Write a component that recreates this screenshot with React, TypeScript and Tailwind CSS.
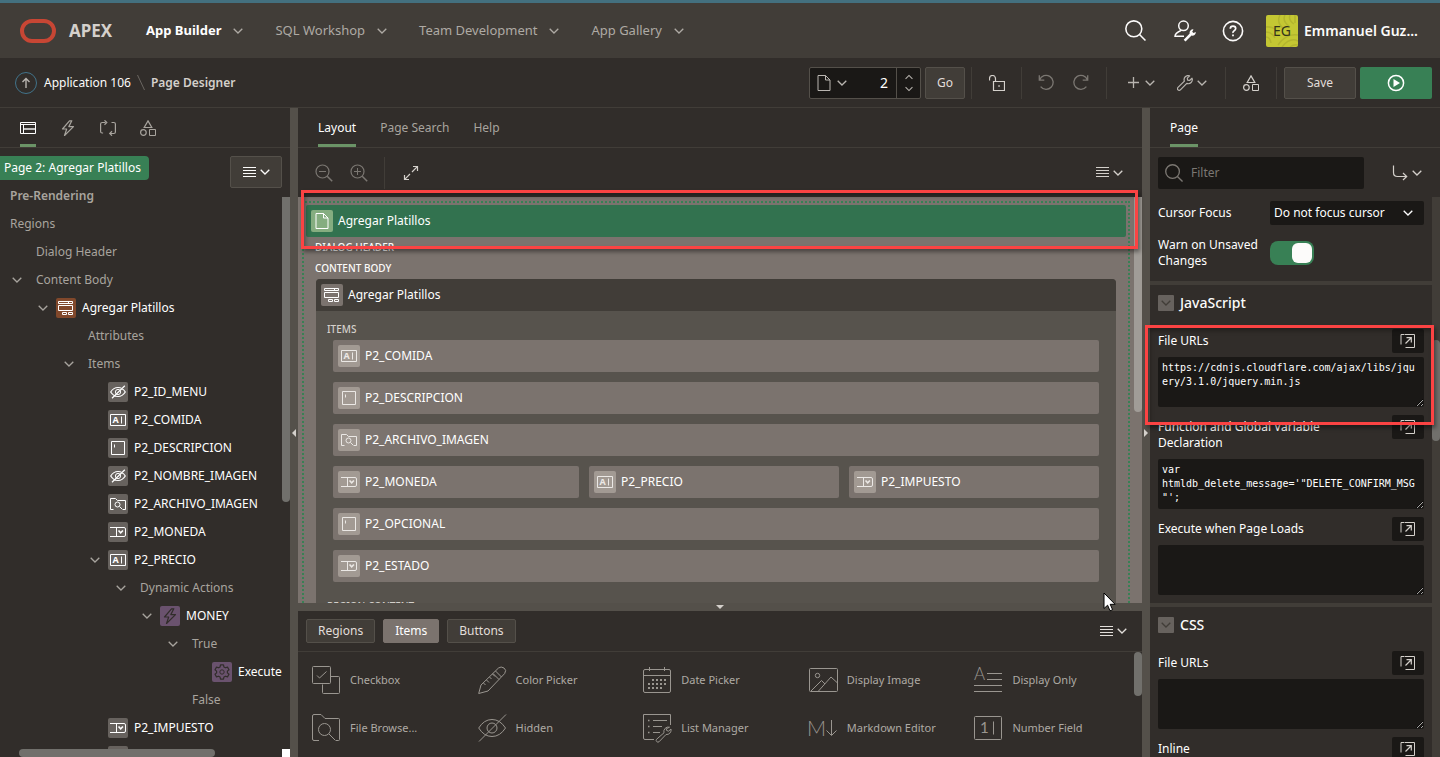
import { useState, type ReactNode } from "react";
import clsx from "clsx";

type IconProps = { className?: string };

function Svg({ size = 16, children, className }: { size?: number; children: ReactNode; className?: string }) {
  return (
    <svg
      width={size}
      height={size}
      viewBox={`0 0 ${size} ${size}`}
      fill="none"
      stroke="currentColor"
      aria-hidden="true"
      className={clsx("shrink-0", className)}
    >
      {children}
    </svg>
  );
}

/* ---------- toolbar icons ---------- */

function Chevron({ className }: IconProps) {
  return (
    <svg width="10" height="6" viewBox="0 0 10 6" fill="none" stroke="currentColor" strokeWidth="1.3" aria-hidden="true" className={clsx("shrink-0", className)}>
      <path d="M.7.7 5 5 9.3.7" />
    </svg>
  );
}

function MenuIcon() {
  return (
    <svg width="13" height="11" viewBox="0 0 13 11" stroke="currentColor" aria-hidden="true" className="shrink-0">
      <path d="M0 .5h13M0 3.5h13M0 6.5h13M0 9.5h13" />
    </svg>
  );
}

const TreeTabIcon = () => (
  <Svg>
    <path d="M.5 2.5h15v11H.5zM.5 4.5h15M3.5 4.5v9" />
    <path d="M4 9h11" strokeWidth="2" opacity=".7" />
  </Svg>
);

const Bolt = ({ className }: IconProps) => (
  <Svg className={className}>
    <path d="M9.5.8 2.5 9h4.2l-2.2 6.5L13.5 6.6H8.8L11.8.8z" strokeLinejoin="round" strokeWidth="1.2" />
  </Svg>
);

const LoopIcon = () => (
  <Svg>
    <path d="M5.5 2.5H2.2Q.6 2.5.6 4v7.5Q.6 13 2.1 13h1M4.5.3l2.3 2.2-2.3 2.2M10.5 13.5h3.3q1.6 0 1.6-1.5V4q0-1.5-1.6-1.5h-2.300M12 11.300l-2.300 2.200 2.300 2.200" strokeWidth="1.2" />
  </Svg>
);

const ShapesIcon = () => (
  <Svg>
    <path d="M8 .9 11.8 7.5H4.2z" strokeWidth="1.2" />
    <circle cx="3.4" cy="12.5" r="2.8" strokeWidth="1.2" />
    <path d="M9.5 9.5h6v6h-6z" />
  </Svg>
);

const FileIcon = () => (
  <Svg>
    <path d="M2 .5h7.500L14 5v10.500H2zM9.500.5V5H14" />
  </Svg>
);

const LockIcon = () => (
  <Svg>
    <path d="M4.500 6.500h11v9h-11zM6.500 6.500V3.500a3 3 0 0 0-6 0v2" strokeWidth="1.2" />
    <path d="M9.300 11h1.500" strokeWidth="1.500" />
  </Svg>
);

const UndoIcon = ({ className }: IconProps) => (
  <Svg className={className} size={17}>
    <path d="M1.300 1.200v5h5M1.600 5.800A7 7 0 1 1 2.600 12.700" strokeWidth="1.300" />
  </Svg>
);

const WrenchIcon = () => (
  <Svg>
    <path d="M12.600.9a4 4 0 0 0-5.200 5.200L1 12.400a1.600 1.600 0 0 0 2.400 2.400L9.800 8.400a4 4 0 0 0 5.200-5.200l-2.400 2.300-2-.3-.3-2z" strokeLinejoin="round" strokeWidth="1.200" />
  </Svg>
);

const PlayIcon = () => (
  <Svg size={18}>
    <circle cx="9" cy="9" r="7.600" strokeWidth="1.500" />
    <path d="M6.500 5v8l6.500-4z" fill="currentColor" stroke="none" />
  </Svg>
);

const ZoomIcon = ({ plus }: { plus?: boolean }) => (
  <Svg size={18}>
    <circle cx="7.500" cy="7.500" r="6.500" strokeWidth="1.200" />
    <path d="m12.200 12.200 5 5" strokeWidth="1.500" />
    <path d={plus ? "M4 7.5h7M7.5 4v7" : "M4 7.5h7"} />
  </Svg>
);

const SearchIcon = ({ size = 18 }: { size?: number }) => (
  <svg width={size} height={size} viewBox="0 0 20 20" fill="none" stroke="currentColor" strokeWidth="1.500" aria-hidden="true" className="shrink-0">
    <circle cx="8.400" cy="8.400" r="7.600" />
    <path d="m13.800 13.800 5.700 5.700" />
  </svg>
);

const ExpandIcon = () => (
  <Svg>
    <path d="M10 1.500h4.500V6M14.300 1.700 9 7M1.500 10v4.500H6M1.700 14.300 7 9" strokeWidth="1.200" />
  </Svg>
);

const GoToIcon = () => (
  <Svg>
    <path d="M1.500.5v7q0 4 4 4h9M11 8l3.700 3.500L11 15" strokeWidth="1.200" />
  </Svg>
);

const PopOutIcon = () => (
  <Svg>
    <path d="M4 1.500H1v10M4.500 1.500h10v13h-9" />
    <path d="M5.500 10.500 11 5M6.500 4.700h4.800v4.800" strokeWidth="1.200" />
  </Svg>
);

const AdminIcon = () => (
  <Svg size={22}>
    <circle cx="9.500" cy="5.800" r="4.800" strokeWidth="1.500" />
    <path d="M7 10.500Q1 13 1 16.300h9" strokeWidth="1.500" />
    <path d="m9.700 19.800 6-6.200a3.400 3.400 0 0 1 3.800-4.200l-1.300 2.400 1.300 1.300 2.300-1a3.400 3.400 0 0 1-4.300 3.500l-6 6z" fill="currentColor" stroke="none" />
  </Svg>
);

const HelpIcon = () => (
  <Svg size={22}>
    <circle cx="11" cy="11" r="9.600" strokeWidth="1.600" />
    <path d="M8.300 8.800q0-2.600 2.700-2.600t2.700 2.400q0 1.300-1.500 2.200T11 13" strokeWidth="1.700" />
    <path d="M10.100 14.500h1.800v1.700h-1.800z" fill="currentColor" stroke="none" />
  </Svg>
);

/* ---------- component type icons ---------- */

type Kind = "region" | "hidden" | "text" | "textarea" | "file" | "select" | "bolt" | "gear";

function KindIcon({ kind }: { kind: Kind }) {
  switch (kind) {
    case "region":
      return (
        <Svg>
          <path d="M.5 1.500h14v2H.5zM10.500 1.500v2M.5 5.500h14v5H.5zM4.500 12.500h4v2h-4zM10.500 12.500h4v2h-4z" />
        </Svg>
      );
    case "hidden":
      return (
        <Svg>
          <path d="M.7 8Q3.500 3.500 8 3.500T15.300 8Q12.500 12.500 8 12.500T.7 8zM2 14.300 14.800 1.700" strokeWidth="1.200" />
          <circle cx="8" cy="8" r="2.600" />
        </Svg>
      );
    case "text":
      return (
        <Svg>
          <path d="M.5 2.500h15v11H.5zM11.500 4.500v7" />
          <text x="2.500" y="11.300" fontSize="9" fontWeight="700" fill="currentColor" stroke="none">A</text>
        </Svg>
      );
    case "textarea":
      return (
        <Svg>
          <path d="M1.500 1.500h13v13h-13zM4.500 4.500v3" />
        </Svg>
      );
    case "file":
      return (
        <Svg>
          <path d="M3.500 13.500H.5v-11h5l2 2h8v9h-2.500" />
          <circle cx="7.500" cy="8.500" r="2.500" />
          <path d="m9.500 10.500 3 3" />
        </Svg>
      );
    case "select":
      return (
        <Svg>
          <path d="M0 3.500h14q1.500 0 1.500 1.500v6q0 1.500-1.500 1.500H0M6.500 3.500v9" />
          <path d="m8.500 6.500 2.200 2.300 2.200-2.300" strokeWidth="1.600" />
        </Svg>
      );
    case "bolt":
      return <Bolt />;
    case "gear":
      return (
        <Svg>
          <path d="M6.500.8h3l.4 2.100 1.600.9 2-.7L15 5.700l-1.600 1.400v1.800l1.600 1.400-1.500 2.600-2-.7-1.600.9-.4 2.100h-3l-.4-2.100-1.600-.9-2 .7L1 10.300l1.600-1.400V7.100L1 5.700l1.500-2.600 2 .7 1.600-.9z" strokeLinejoin="round" strokeWidth="1.200" />
          <circle cx="8" cy="8" r="2.200" />
        </Svg>
      );
  }
}

/* ---------- gallery icons ---------- */

const GALLERY: { label: string; icon: ReactNode }[] = [
  {
    label: "Checkbox",
    icon: (
      <>
        <rect x=".5" y=".5" width="18" height="17" rx="1" />
        <path d="m5 9.500 2.500 2.500L14.500 5.500M19 10.500h7.500q1 0 1 1v15q0 1-1 1h-15q-1 0-1-1v-8" />
      </>
    ),
  },
  {
    label: "Color Picker",
    icon: (
      <path d="M.7 27.500 3 19 20.500 2Q23 0 26 2t.7 5.500L10 25zM17.500 5l6 6M14.500 8l2.500 2.500M11.500 11l2 2M8.500 14l2.500 2.500M5.500 17l2 2M15 7.500l6 6" />
    ),
  },
  {
    label: "Date Picker",
    icon: (
      <>
        <rect x=".5" y="3.500" width="27" height="23" rx="1.500" />
        <path d="M.5 9.500h27M6.500 1v4M21.500 1v4" />
        <path d="M9 14h14M5 18h18M5 22h14" strokeDasharray="2 2" strokeWidth="2" />
      </>
    ),
  },
  {
    label: "Display Image",
    icon: (
      <>
        <rect x=".5" y="2.500" width="28" height="23" rx="1" />
        <circle cx="8.500" cy="9.500" r="2.200" />
        <path d="m2 25 10.500-10.500 3.500 3.500M9.500 25 22 11l6 5.500" />
      </>
    ),
  },
  {
    label: "Display Only",
    icon: (
      <>
        <text x="0" y="14" fontSize="17" fontWeight="300" fill="currentColor" stroke="none" className="font-[Lato,sans-serif]">A</text>
        <path d="M13 7.500h15M13 13.500h15M0 19.500h28M0 25.500h28" />
      </>
    ),
  },
  {
    label: "File Browse...",
    icon: (
      <>
        <path d="M7 26.500H2Q.5 26.500.5 25V2Q.5.5 2 .5h7l4 4h13.500q1 0 1 1v20q0 1-1 1H24" />
        <circle cx="12.500" cy="15.500" r="6" />
        <path d="m17 20 6.500 6.500" />
      </>
    ),
  },
  {
    label: "Hidden",
    icon: (
      <>
        <path d="M.7 14Q6 5.500 14 5.500T27.500 14Q22 22.500 14 22.500T.7 14zM1 27.500 28 .5" />
        <circle cx="14" cy="14" r="5" />
      </>
    ),
  },
  {
    label: "List Manager",
    icon: (
      <>
        <path d="M11 25.500H2Q.5 25.500.5 24V.5h27V11M10 6.500h14M10 12.500h9M10 18.500h7" />
        <path d="M5 6.500h1.500M5 12.500h1.500M5 18.500h1.500" strokeWidth="1.500" />
        <path d="M26.500 13.200a4.500 4.500 0 0 0-5.500 5.600l-7.500 6.500a1.800 1.800 0 0 0 2.500 2.500l7-7.300a4.500 4.500 0 0 0 5-5.500l-2.500 2.200-2-.8-.2-1.600z" />
      </>
    ),
  },
  {
    label: "Markdown Editor",
    icon: (
      <>
        <text x="-2" y="22" fontSize="21" fontWeight="300" fill="currentColor" stroke="none" className="font-[Lato,sans-serif]">M</text>
        <path d="M22.500 6v15M17.500 16.500l5 5 5-5" />
      </>
    ),
  },
  {
    label: "Number Field",
    icon: (
      <>
        <rect x=".5" y="2.500" width="27" height="23" rx="1" />
        <path d="M19.500 7.500v13" />
        <text x="6" y="19" fontSize="15" fill="currentColor" stroke="none" className="font-[Lato,sans-serif]">1</text>
      </>
    ),
  },
];

/* ---------- data ---------- */

type TreeNode = { level: number; label: string; kind?: Kind; open?: boolean; bold?: boolean };

const TREE: TreeNode[] = [
  { level: 0, label: "Pre-Rendering", bold: true },
  { level: 0, label: "Regions" },
  { level: 1, label: "Dialog Header" },
  { level: 1, label: "Content Body", open: true },
  { level: 2, label: "Agregar Platillos", kind: "region", open: true },
  { level: 3, label: "Attributes" },
  { level: 3, label: "Items", open: true },
  { level: 4, label: "P2_ID_MENU", kind: "hidden" },
  { level: 4, label: "P2_COMIDA", kind: "text" },
  { level: 4, label: "P2_DESCRIPCION", kind: "textarea" },
  { level: 4, label: "P2_NOMBRE_IMAGEN", kind: "hidden" },
  { level: 4, label: "P2_ARCHIVO_IMAGEN", kind: "file" },
  { level: 4, label: "P2_MONEDA", kind: "select" },
  { level: 4, label: "P2_PRECIO", kind: "text", open: true },
  { level: 5, label: "Dynamic Actions", open: true },
  { level: 6, label: "MONEY", kind: "bolt", open: true },
  { level: 7, label: "True", open: true },
  { level: 8, label: "Execute", kind: "gear" },
  { level: 7, label: "False" },
  { level: 4, label: "P2_IMPUESTO", kind: "select" },
  { level: 4, label: "P2_OPCIONAL", kind: "textarea" },
];

const LAYOUT_ROWS: { name: string; kind: Kind }[][] = [
  [{ name: "P2_COMIDA", kind: "text" }],
  [{ name: "P2_DESCRIPCION", kind: "textarea" }],
  [{ name: "P2_ARCHIVO_IMAGEN", kind: "file" }],
  [
    { name: "P2_MONEDA", kind: "select" },
    { name: "P2_PRECIO", kind: "text" },
    { name: "P2_IMPUESTO", kind: "select" },
  ],
  [{ name: "P2_OPCIONAL", kind: "textarea" }],
  [{ name: "P2_ESTADO", kind: "select" }],
];

const NAV = ["App Builder", "SQL Workshop", "Team Development", "App Gallery"];

/* ---------- pieces ---------- */

function Header() {
  return (
    <header className="flex h-[58px] shrink-0 items-center border-t-[3px] border-[#43707f] bg-[#413d38] pl-5 pr-[22px]">
      <svg width="36" height="24" viewBox="0 0 36 24" fill="none" aria-hidden="true">
        <rect x="2" y="2" width="32" height="20" rx="10" stroke="#c74634" strokeWidth="4" />
      </svg>
      <span className="ml-[13px] w-[77px] text-[17px] font-bold text-[#d4d0cb]">APEX</span>
      <nav className="flex flex-1 items-center gap-8 text-[13px]">
        {NAV.map((item, i) => (
          <button key={item} className={clsx("flex items-center gap-3", i === 0 ? "font-bold text-white" : "text-[#aeaaa4]")}>
            {item}
            <Chevron className="text-[#aeaaa4]" />
          </button>
        ))}
      </nav>
      <div className="flex items-center text-[#fcfbfa]">
        <button aria-label="Search" className="mr-7"><SearchIcon size={21} /></button>
        <button aria-label="Administration" className="mr-[26px]"><AdminIcon /></button>
        <button aria-label="Help" className="mr-[22px]"><HelpIcon /></button>
        <button className="flex items-center gap-[6px] text-sm font-semibold">
          <span className="relative flex h-8 w-8 items-center justify-center overflow-hidden rounded-xs bg-[#c4c733] font-normal text-[#33331a]">
            <svg width="32" height="32" viewBox="0 0 32 32" fill="none" stroke="#b3b52e" strokeWidth="1.5" aria-hidden="true" className="absolute inset-0">
              <path d="M14 0Q10 8 18 14M19 0q-3 6 4 11M24 0q-2 5 4 9M29 0v8M0 12q8-1 12 6M0 17q6 0 9 6M0 22q4 0 5 6M16 32Q24 22 32 26M12 30Q20 18 32 20M24 32q4-3 8-2" />
            </svg>
            <span className="relative">EG</span>
          </span>
          Emmanuel Guz...
        </button>
      </div>
    </header>
  );
}

const Divider = () => <div className="h-8 w-px bg-[#413d38]" />;

function Toolbar() {
  return (
    <div className="flex h-[50px] shrink-0 items-center border-b border-[#413d38] pl-[15px] pr-2 text-[#b9b5b0]">
      <button aria-label="Up" className="flex h-[22px] w-[22px] items-center justify-center rounded-full border border-[#41738a]">
        <Svg><path d="M8 13V3.500M4.500 7 8 3.500 11.500 7" strokeWidth="1.400" /></Svg>
      </button>
      <a href="#application" className="ml-[7px] text-xs text-[#fcfbfa]">Application 106</a>
      <svg width="8" height="15" viewBox="0 0 8 15" stroke="#6b6762" aria-hidden="true" className="mx-[6px]">
        <path d="M.5 0 7.500 15" />
      </svg>
      <span className="text-xs font-semibold text-[#d4d0cb]">Page Designer</span>

      <div className="ml-auto flex items-center">
        <div className="flex h-8 w-28 items-center rounded-xs border border-[#54504a] bg-[#1a1816]">
          <button aria-label="Page finder" className="flex items-center gap-[5px] pl-[6px]">
            <FileIcon />
            <Chevron />
          </button>
          <input
            aria-label="Page number"
            defaultValue="2"
            className="w-0 flex-1 bg-transparent pr-2 text-right text-sm text-white outline-none"
          />
          <div className="flex h-full w-6 flex-col items-center justify-between border-l border-[#54504a] py-[6px]">
            <button aria-label="Next page"><Chevron className="w-2 rotate-180" /></button>
            <button aria-label="Previous page"><Chevron className="w-2" /></button>
          </div>
        </div>
        <button className="ml-1 mr-[6px] h-8 w-10 rounded-xs border border-[#54504a] bg-[#413d38] text-xs text-[#e2deda]">Go</button>
        <Divider />
        <button aria-label="Lock page" className="ml-[17px] mr-4 text-[#d4d0cb]"><LockIcon /></button>
        <Divider />
        <button aria-label="Undo" className="ml-4 text-[#7b7772]"><UndoIcon /></button>
        <button aria-label="Redo" className="ml-[17px] mr-[17px] text-[#7b7772]"><UndoIcon className="-scale-x-100" /></button>
        <Divider />
        <button aria-label="Create" className="ml-[21px] flex items-center gap-[6px]">
          <svg width="11" height="11" viewBox="0 0 11 11" stroke="currentColor" strokeWidth="1.300" aria-hidden="true">
            <path d="M5.500 0v11M0 5.500h11" />
          </svg>
          <Chevron />
        </button>
        <button aria-label="Utilities" className="ml-[22px] mr-[18px] flex items-center gap-1"><WrenchIcon /><Chevron /></button>
        <Divider />
        <button aria-label="Shared components" className="mx-[17px] text-[#d4d0cb]"><ShapesIcon /></button>
        <Divider />
        <button className="ml-[7px] mr-1 h-8 w-[72px] rounded-xs border border-[#54504a] bg-[#413d38] text-xs text-[#e2deda]">Save</button>
        <button aria-label="Save and run page" className="flex h-8 w-[72px] items-center justify-center rounded-xs bg-[#388055] text-white"><PlayIcon /></button>
      </div>
    </div>
  );
}

function Splitter({ side }: { side: "left" | "right" }) {
  return (
    <div className="flex w-2 shrink-0 items-center justify-center bg-[#54504a]">
      <div
        className={clsx(
          "border-y-4 border-y-transparent",
          side === "left" ? "border-r-4 border-r-[#d4d0cb]" : "border-l-4 border-l-[#d4d0cb]"
        )}
      />
    </div>
  );
}

function TreeRow({ node }: { node: TreeNode }) {
  const indent = node.level === 0 ? 10 : 26 * node.level - 14;
  return (
    <li className="flex h-7 items-center whitespace-nowrap text-xs" style={{ paddingLeft: indent }}>
      {node.level > 0 && (
        <span className={clsx("shrink-0 text-[#a8a49e]", node.kind ? "w-[18px]" : "w-6")}>{node.open && <Chevron />}</span>
      )}
      {node.kind && (
        <span
          className={clsx(
            "mr-[6px] flex h-5 w-5 shrink-0 items-center justify-center rounded-xs",
            node.kind === "region" && "bg-[#81482b] text-white",
            (node.kind === "bolt" || node.kind === "gear") && "bg-[#6a526e] text-[#312d2a]",
            node.kind !== "region" && node.kind !== "bolt" && node.kind !== "gear" && "bg-[#67625e] text-white"
          )}
        >
          <KindIcon kind={node.kind} />
        </span>
      )}
      <span className={node.bold ? "font-semibold text-[#a8a49e]" : node.kind ? "text-white" : "text-[#a8a49e]"}>{node.label}</span>
    </li>
  );
}

function RenderingTree() {
  const tabs = [
    { name: "Rendering", icon: <TreeTabIcon /> },
    { name: "Dynamic Actions", icon: <Bolt /> },
    { name: "Processing", icon: <LoopIcon /> },
    { name: "Page Shared Components", icon: <ShapesIcon /> },
  ];
  return (
    <aside className="flex w-[290px] shrink-0 flex-col">
      <div className="flex h-10 shrink-0 gap-6 border-b border-[#413d38] pl-5">
        {tabs.map((tab, i) => (
          <button
            key={tab.name}
            aria-label={tab.name}
            className={clsx("flex w-4 items-center justify-center border-b-[3px] pt-[3px]", i === 0 ? "border-[#6b9467] text-white" : "border-transparent text-[#a8a49e]")}
          >
            {tab.icon}
          </button>
        ))}
      </div>
      <div className="relative min-h-0 flex-1 overflow-hidden pr-2 pt-[6px]">
        <ul className="overflow-hidden">
          <li className="flex h-7 items-center">
            <span className="flex h-6 items-center rounded-r bg-[#388055] pl-1 pr-2 text-xs text-white">Page 2: Agregar Platillos</span>
          </li>
          {TREE.map((node) => (
            <TreeRow key={node.label} node={node} />
          ))}
        </ul>
        <button aria-label="Tree menu" className="absolute right-2 top-2 flex h-8 w-[52px] items-center justify-center gap-1 rounded-xs border border-[#54504a] bg-[#413d38] text-[#fcfbfa]">
          <MenuIcon />
          <Chevron />
        </button>
        {/* scroll bars */}
        <div className="absolute right-0 top-[49px] h-[305px] w-2 rounded-b bg-[#71706c]" />
        <div className="absolute bottom-0 left-0 right-2 h-2 bg-[#312d2a] pl-[19px]">
          <div className="h-2 w-[196px] rounded bg-[#71706c]" />
        </div>
        <div className="absolute bottom-0 right-0 h-2 w-2 bg-white" />
      </div>
    </aside>
  );
}

function LayoutTile({ kind, children, className }: { kind: Kind | "page"; children: ReactNode; className?: string }) {
  return (
    <div className={clsx("flex h-8 items-center gap-[5px] pl-[5px] text-xs text-white", className)}>
      <span
        className={clsx(
          "flex h-[22px] w-[22px] shrink-0 items-center justify-center rounded-xs",
          kind === "page" ? "bg-[#85ad80]" : kind === "region" ? "bg-[#7b736e]" : "bg-[#a29a93] text-[#ebe8e5]"
        )}
      >
        {kind === "page" ? <FileIcon /> : <KindIcon kind={kind} />}
      </span>
      {children}
    </div>
  );
}

const slotLabel = "flex h-[21px] items-center px-[11px] text-[10px] font-medium";

function LayoutPane() {
  return (
    <section className="flex min-h-0 flex-1 flex-col">
      <div role="tablist" className="flex h-10 shrink-0 gap-6 border-b border-[#413d38] pl-5 text-xs">
        {["Layout", "Page Search", "Help"].map((tab, i) => (
          <button
            key={tab}
            role="tab"
            aria-selected={i === 0}
            className={clsx("border-b-[3px] pt-1", i === 0 ? "border-[#6b9467] text-white" : "border-transparent text-[#a8a49e]")}
          >
            {tab}
          </button>
        ))}
      </div>
      <div className="flex h-[49px] shrink-0 items-center pl-[17px] pr-[19px] text-[#7b7772]">
        <button aria-label="Zoom out"><ZoomIcon /></button>
        <button aria-label="Zoom in" className="ml-[17px] mr-4"><ZoomIcon plus /></button>
        <Divider />
        <button aria-label="Expand" className="ml-[18px] text-[#d4d0cb]"><ExpandIcon /></button>
        <button aria-label="Layout menu" className="ml-auto flex items-center gap-1 text-[#d4d0cb]"><MenuIcon /><Chevron /></button>
      </div>
      <div className="relative min-h-0 flex-1 overflow-hidden bg-[#7b736e] pr-2">
        <div className="m-1 border-2 border-dotted border-[#388055]">
          <LayoutTile kind="page" className="mx-[2px] mt-[2px] rounded-xs bg-[#32724f]">Agregar Platillos</LayoutTile>
          <div className={clsx(slotLabel, "text-[#fcfbfa]")}>DIALOG HEADER</div>
          <div className={clsx(slotLabel, "text-[#fcfbfa]")}>CONTENT BODY</div>
          <div className="mx-3 rounded-t bg-[#57534d] pb-8">
            <LayoutTile kind="region" className="rounded-t bg-[#413d38]">Agregar Platillos</LayoutTile>
            <div className={clsx(slotLabel, "mt-2 text-[#d4d0cb]")}>ITEMS</div>
            <div className="mx-[17px] flex flex-col gap-[10px]">
              {LAYOUT_ROWS.map((row) => (
                <div key={row[0].name} className={clsx("grid gap-[10px]", row.length === 3 && "grid-cols-[246fr_250fr_250fr]")}>
                  {row.map((item) => (
                    <LayoutTile key={item.name} kind={item.kind} className="rounded-xs bg-[#7b736e]">{item.name}</LayoutTile>
                  ))}
                </div>
              ))}
            </div>
            <div className={clsx(slotLabel, "mt-[14px] text-[#d4d0cb]")}>REGION CONTENT</div>
          </div>
        </div>
        <div className="absolute right-0 top-0 h-[215px] w-2 rounded-b bg-[#a09c97]" />
      </div>
    </section>
  );
}

function Gallery() {
  const [active, setActive] = useState("Items");
  return (
    <section className="flex h-[146px] shrink-0 flex-col overflow-hidden">
      <div className="flex h-[41px] shrink-0 items-center gap-2 border-b border-[#413d38] pl-2 pr-[15px] text-xs text-[#e2deda]">
        {["Regions", "Items", "Buttons"].map((tab) => (
          <button
            key={tab}
            onClick={() => setActive(tab)}
            className={clsx(
              "h-6 rounded-xs border px-[11px]",
              active === tab ? "border-[#7b736e] bg-[#7b736e] text-white" : "border-[#54504a] bg-[#413d38]"
            )}
          >
            {tab}
          </button>
        ))}
        <button aria-label="Gallery menu" className="ml-auto flex items-center gap-1"><MenuIcon /><Chevron /></button>
      </div>
      <div className="relative pr-2">
        <ul className="grid grid-cols-5 px-1 pt-1">
          {GALLERY.map((item) => (
            <li key={item.label} className="flex h-12 items-center gap-[10px] pl-[10px] text-[11px] text-[#aeaaa4]">
              <Svg size={28} className="overflow-visible text-[#9a9690]">{item.icon}</Svg>
              {item.label}
            </li>
          ))}
        </ul>
        <div className="absolute right-0 top-0 h-11 w-2 rounded bg-[#71706c]" />
      </div>
    </section>
  );
}

function GroupTitle({ children }: { children: ReactNode }) {
  return (
    <h2 className="flex h-9 items-center gap-[6px] text-sm font-medium text-[#fcfbfa]">
      <button aria-label="Collapse group" className="flex h-4 w-4 items-center justify-center rounded-[1px] bg-[#67625e] text-[#413d38]">
        <Chevron />
      </button>
      {children}
    </h2>
  );
}

function CodeField({ id, label, value = "" }: { id: string; label: string; value?: string }) {
  return (
    <div className="pt-2">
      <div className="mb-1 flex items-start justify-between">
        <label htmlFor={id} className="w-44 py-1 text-xs leading-4 text-white">{label}</label>
        <button aria-label={`Code editor: ${label}`} className="flex h-6 w-8 items-center justify-center rounded-xs bg-[#1a1816] text-[#d4d0cb]">
          <PopOutIcon />
        </button>
      </div>
      <textarea
        id={id}
        defaultValue={value}
        spellCheck={false}
        className="block h-[50px] w-full resize-y overflow-hidden rounded-xs bg-[#1a1816] px-1 py-1 font-['DejaVu_Sans_Mono',monospace] text-[10px] leading-[14px] text-white outline-none [line-break:anywhere]"
      />
    </div>
  );
}

function PropertyEditor() {
  return (
    <aside className="flex w-[290px] shrink-0 flex-col">
      <div role="tablist" className="flex h-10 shrink-0 border-b border-[#413d38] pl-5 text-xs">
        <button role="tab" aria-selected="true" className="border-b-[3px] border-[#6b9467] pt-1 text-white">Page</button>
      </div>
      <div className="flex h-[49px] shrink-0 items-center pl-2 pr-[18px]">
        <div className="flex h-8 w-[206px] items-center gap-2 rounded-xs bg-[#1a1816] pl-[7px] text-[#7b7772]">
          <SearchIcon />
          <input aria-label="Filter" placeholder="Filter" className="w-0 flex-1 bg-transparent text-xs text-white outline-none placeholder:text-[#7b7772]" />
        </div>
        <button aria-label="Go to group" className="ml-auto flex items-center gap-1 text-[#d4d0cb]"><GoToIcon /><Chevron /></button>
      </div>
      <div className="flex min-h-0 flex-1">
        <div className="min-w-0 flex-1 overflow-hidden">
          <div className="border-b-4 border-[#413d38] px-2 pb-3 pt-1 text-xs text-white">
            <div className="flex h-6 items-center">
              <label htmlFor="cursor-focus" className="w-28">Cursor Focus</label>
              <div className="relative flex flex-1 items-center">
                <select id="cursor-focus" className="h-6 w-full appearance-none rounded-xs bg-[#1a1816] pl-1 outline-none">
                  <option>Do not focus cursor</option>
                </select>
                <Chevron className="pointer-events-none absolute right-[11px]" />
              </div>
            </div>
            <div className="mt-3 flex items-center">
              <label htmlFor="warn-unsaved" className="w-28 leading-4">Warn on Unsaved Changes</label>
              <div className="relative flex h-6 w-11 items-center">
                <input id="warn-unsaved" type="checkbox" role="switch" defaultChecked className="peer h-6 w-11 appearance-none rounded-lg bg-[#67625e] checked:bg-[#388055]" />
                <span className="pointer-events-none absolute left-[2px] h-5 w-5 rounded-md bg-[#fcfbfa] peer-checked:left-[22px]" />
              </div>
            </div>
          </div>
          <div className="border-b-4 border-[#413d38] px-2 pb-2">
            <GroupTitle>JavaScript</GroupTitle>
            <CodeField id="js-urls" label="File URLs" value="https://cdnjs.cloudflare.com/ajax/libs/jquery/3.1.0/jquery.min.js" />
            <CodeField id="js-globals" label="Function and Global Variable Declaration" value={"var\nhtmldb_delete_message='\"DELETE_CONFIRM_MSG\"';"} />
            <CodeField id="js-onload" label="Execute when Page Loads" />
          </div>
          <div className="px-2">
            <GroupTitle>CSS</GroupTitle>
            <CodeField id="css-urls" label="File URLs" />
            <CodeField id="css-inline" label="Inline" />
          </div>
        </div>
        <div className="w-2 shrink-0 bg-[#413d38] pt-[143px]">
          <div className="h-[101px] rounded bg-[#71706c]" />
        </div>
      </div>
    </aside>
  );
}

const highlight = "pointer-events-none absolute border-[3px] border-[#fb4343] shadow-[2px_3px_4px_rgba(0,0,0,0.4),inset_2px_3px_4px_rgba(0,0,0,0.3)]";

export default function App() {
  return (
    <div className="relative flex h-screen flex-col overflow-hidden bg-[#312d2a] font-['Noto_Sans','Liberation_Sans',sans-serif]">
      <Header />
      <Toolbar />
      <main className="flex min-h-0 flex-1">
        <RenderingTree />
        <Splitter side="left" />
        <div className="flex min-w-0 flex-1 flex-col">
          <LayoutPane />
          <div className="flex h-2 shrink-0 items-center justify-center bg-[#54504a]">
            <div className="border-x-4 border-t-4 border-x-transparent border-t-[#d4d0cb]" />
          </div>
          <Gallery />
        </div>
        <Splitter side="right" />
        <PropertyEditor />
      </main>

      {/* callouts */}
      <div className={clsx(highlight, "left-[301px] right-[302px] top-[190px] h-[59px]")} />
      <div className={clsx(highlight, "right-[6px] top-[325px] h-[100px] w-[289px]")} />

      <svg width="14" height="20" viewBox="0 0 14 20" className="pointer-events-none absolute right-[323px] top-[592px]" aria-hidden="true">
        <path d="M1 1v15.500l3.600-3.300 2.400 5.600 2.600-1.100-2.400-5.400h4.900z" fill="#fff" stroke="#000" />
      </svg>
    </div>
  );
}
